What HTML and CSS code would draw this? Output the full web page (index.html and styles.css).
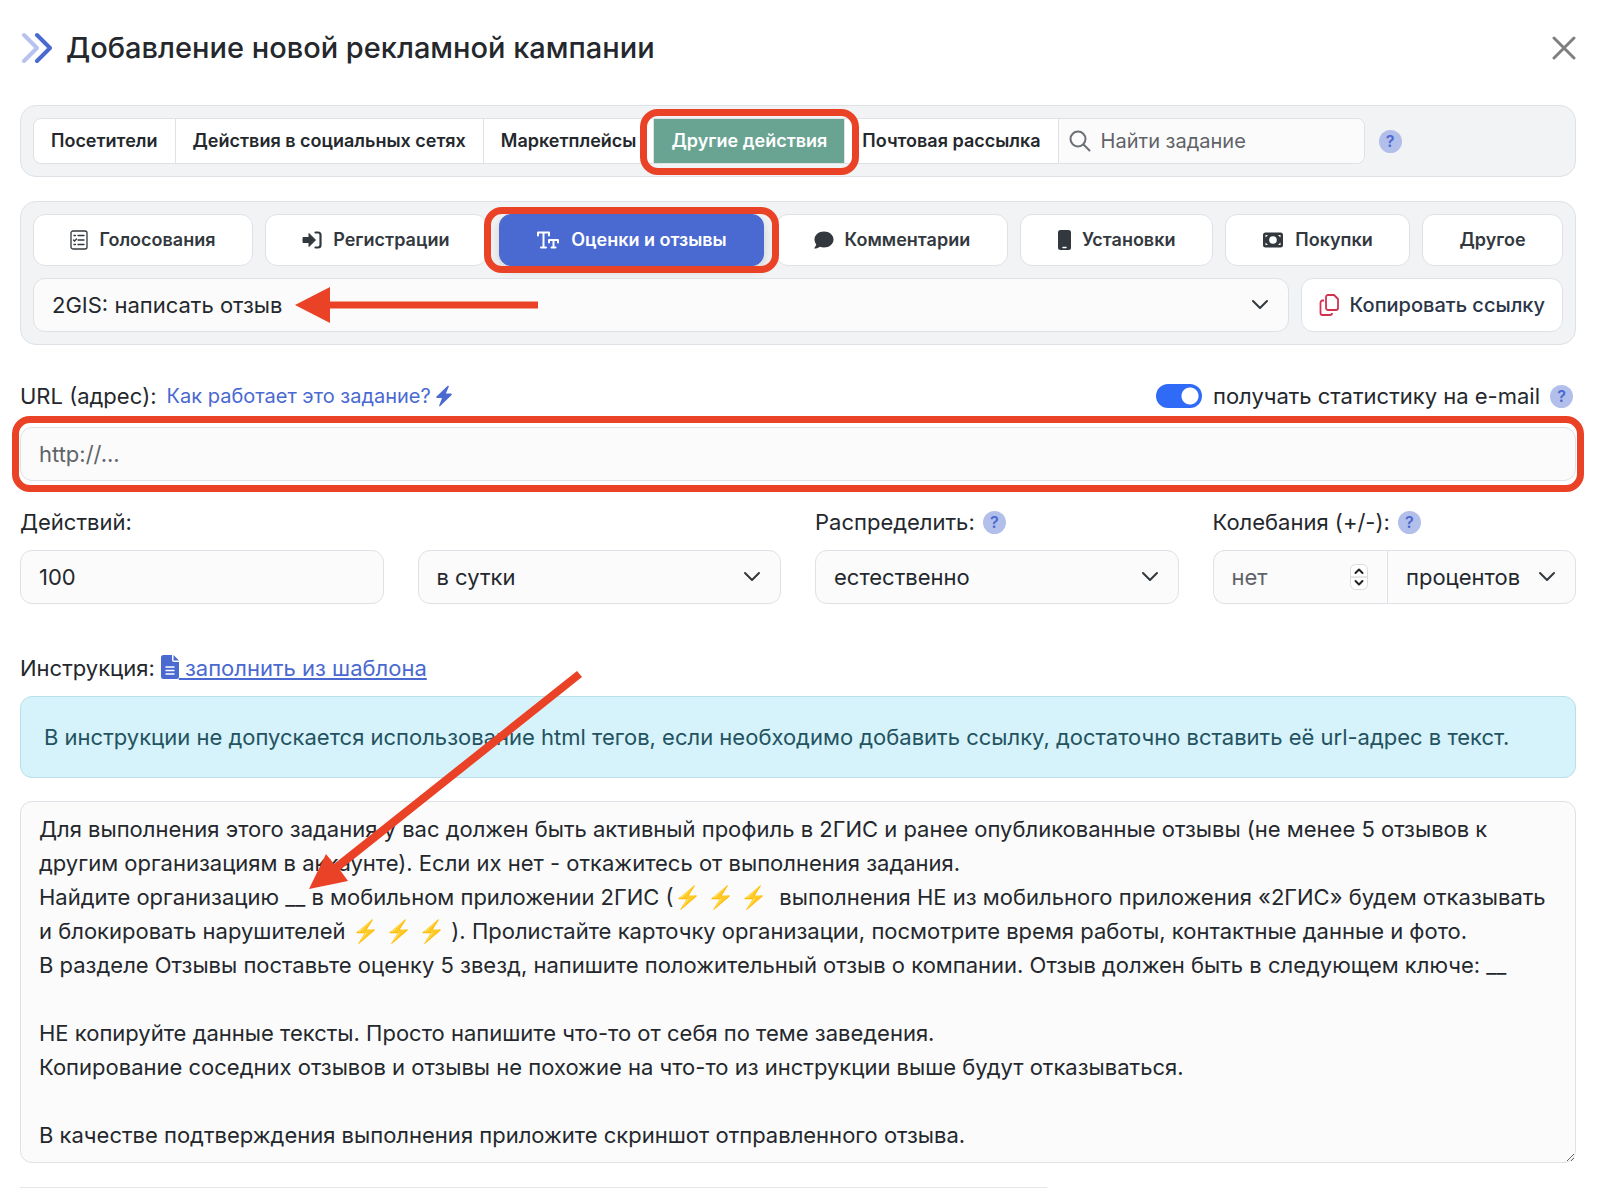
FILE: index.html
```
<!DOCTYPE html>
<html lang="ru">

<head>
  <meta charset="UTF-8">
  <meta name="viewport" content="width=device-width, initial-scale=1.0">
  <title>Добавление новой рекламной кампании</title>
  <link rel="stylesheet" href="styles.css">
</head>

<body>
  <main class="page">
    <header class="header">
      <svg width="32" height="32" viewBox="0 0 32 32" fill="none" stroke-width="4" stroke-linecap="round" stroke-linejoin="round">
        <path d="M4 3l13 13L4 29" stroke="#b7c2ee"/>
        <path d="M17 3l13 13-13 13" stroke="#4a69d1"/>
      </svg>
      <h1 class="title">Добавление новой рекламной кампании</h1>
      <button type="button" class="close" aria-label="Закрыть">
        <svg width="24" height="24" viewBox="0 0 24 24" fill="none" stroke="#7f7f7f" stroke-width="3" stroke-linecap="round"><path d="M2 2l20 20M22 2L2 22"/></svg>
      </button>
    </header>

    <nav class="panel tabs">
      <div class="tab-group">
        <button type="button" class="tab">Посетители</button>
        <button type="button" class="tab">Действия в социальных сетях</button>
        <button type="button" class="tab">Маркетплейсы</button>
        <button type="button" class="tab tab-active">Другие действия</button>
        <button type="button" class="tab">Почтовая рассылка</button>
        <div class="search">
          <svg width="22" height="22" viewBox="0 0 22 22" fill="none" stroke="#6c7076" stroke-width="2" stroke-linecap="round"><circle cx="9" cy="9" r="7.5"/><path d="M14.5 14.5l6 6"/></svg>
          <input type="search" placeholder="Найти задание" aria-label="Найти задание">
        </div>
      </div>
      <button type="button" class="help">?</button>
    </nav>

    <section class="panel">
      <div class="types">
        <button type="button" class="type">
          <svg width="18" height="20" viewBox="0 0 18 20" fill="none" stroke="#32383e" stroke-width="1.3"><rect x="1" y="1" width="16" height="18" rx="2"/><path d="M8 5.5h6M8 10h6M8 14.5h6M4 5.5h1.500M3.500 10l1 1 2-2M4 14.500h1.500" stroke-linecap="round"/></svg>
          Голосования
        </button>
        <button type="button" class="type">
          <svg width="20" height="20" viewBox="0 0 20 20"><path d="M1 7.500h6v-4l6.500 6.500L7 16.500v-4H1z" fill="#32383e" stroke="#32383e" stroke-linejoin="round"/><path d="M13.500 2.500H16A2.500 2.500 0 0 1 18.500 5v10a2.500 2.500 0 0 1-2.500 2.500h-2.500" fill="none" stroke="#32383e" stroke-width="2.2" stroke-linecap="round"/></svg>
          Регистрации
        </button>
        <button type="button" class="type type-active">
          <svg width="24" height="20" viewBox="0 0 24 20" fill="none" stroke="#fff" stroke-width="2"><path d="M2 5.500v-3h11v3M7.500 2.500v15M5 17.500h5M13 12.500V10h9v2.500M17.500 10v7.500M15.500 17.500h4" stroke-linecap="round" stroke-linejoin="round"/></svg>
          Оценки и отзывы
        </button>
        <button type="button" class="type">
          <svg width="20" height="20" viewBox="0 0 20 20" fill="#32383e"><path d="M10 1.500c5.300 0 9.500 3.500 9.500 8s-4.200 8-9.500 8c-1.500 0-2.900-.3-4.200-.8C4.600 17.700 2.600 18.500.8 18.500c-.5 0-.6-.5-.3-.8.9-1 1.600-2.200 1.700-3.400C1.100 13 .5 11.300.5 9.500c0-4.500 4.200-8 9.500-8z"/></svg>
          Комментарии
        </button>
        <button type="button" class="type">
          <svg width="14" height="20" viewBox="0 0 14 20"><rect x="1" width="13" height="20" rx="2.5" fill="#32383e"/><path d="M6 17.500h3" stroke="#fff" stroke-width="1.5" stroke-linecap="round"/></svg>
          Установки
        </button>
        <button type="button" class="type">
          <svg width="22" height="20" viewBox="0 0 22 20"><rect x="1" y="2.5" width="20" height="15" rx="2.5" fill="#32383e"/><circle cx="11" cy="10" r="3.8" fill="#fff"/><path d="M3.500 5H6L3.500 7.500zM18.500 5H16l2.500 2.500zM3.500 15H6l-2.500-2.500zM18.500 15H16l2.500-2.500z" fill="#fff"/></svg>
          Покупки
        </button>
        <button type="button" class="type">Другое</button>
      </div>
      <div class="task-row">
        <div class="select task-select">
          <select aria-label="Задание">
            <option>2GIS: написать отзыв</option>
          </select>
          <svg class="chevron" width="18" height="18" viewBox="0 0 18 18"><path d="M2 5l7 7 7-7"/></svg>
          <svg class="arrow arrow-task" width="244" height="36" viewBox="0 0 244 36" fill="#ea4226"><path d="M0 18L35 0v14.500h208v7H35V36z"/></svg>
        </div>
        <button type="button" class="copy">
          <svg width="20" height="22" viewBox="0 0 20 22" fill="none" stroke="#d03250" stroke-width="1.8" stroke-linejoin="round"><path d="M9 1h6l4 4v9a2 2 0 0 1-2 2H9a2 2 0 0 1-2-2V3a2 2 0 0 1 2-2z"/><path d="M5 6.500H3.500a2 2 0 0 0-2 2V19a2 2 0 0 0 2 2H11a2 2 0 0 0 2-2"/></svg>
          Копировать ссылку
        </button>
      </div>
    </section>

    <form>
      <div class="line url-line">
        <label for="url">URL (адрес):</label>
        <a href="#" class="how">Как работает это задание?
          <svg width="18" height="22" viewBox="0 0 18 22" fill="#4a69d1"><path d="M12.500 1l-11 10.500c-.5.6-.2 1.500.6 1.500H7l-3 8c.4.3.9.2 1.300-.1L16.600 10c.5-.6.2-1.400-.6-1.400h-5.200l3.100-7.100c-.2-.8-.9-1-1.400-.5z"/></svg>
        </a>
        <label class="stat"><input type="checkbox" class="toggle" checked>получать статистику на e-mail</label>
        <button type="button" class="help">?</button>
      </div>
      <div class="url">
        <input type="text" id="url" class="field" placeholder="http://...">
      </div>

      <div class="columns">
        <div>
          <div class="line"><label for="count">Действий:</label></div>
          <input type="text" id="count" class="field" value="100">
        </div>
        <div class="bottom">
          <div class="select">
            <select aria-label="Период">
              <option>в сутки</option>
            </select>
            <svg class="chevron" width="18" height="18" viewBox="0 0 18 18"><path d="M2 5l7 7 7-7"/></svg>
          </div>
        </div>
        <div>
          <div class="line"><label for="spread">Распределить:</label><button type="button" class="help">?</button></div>
          <div class="select">
            <select id="spread">
              <option>естественно</option>
            </select>
            <svg class="chevron" width="18" height="18" viewBox="0 0 18 18"><path d="M2 5l7 7 7-7"/></svg>
          </div>
        </div>
        <div>
          <div class="line"><label for="swing">Колебания (+/-):</label><button type="button" class="help">?</button></div>
          <div class="group">
            <div class="number">
              <input type="number" id="swing" class="field" placeholder="нет">
              <svg class="spin" width="18" height="26" viewBox="0 0 18 26" fill="none"><rect x=".5" y=".5" width="17" height="25" rx="5" fill="#fff" stroke="#dcdcdc"/><path d="M1 13h16" stroke="#d0d0d0"/><path d="M5.500 9L9 5.500 12.500 9M5.500 17L9 20.500l3.500-3.500" stroke="#222" stroke-width="2" stroke-linecap="round" stroke-linejoin="round"/></svg>
            </div>
            <div class="select">
              <select aria-label="Единицы">
                <option>процентов</option>
              </select>
              <svg class="chevron" width="18" height="18" viewBox="0 0 18 18"><path d="M2 5l7 7 7-7"/></svg>
            </div>
          </div>
        </div>
      </div>

      <div class="instruction">
        <div class="line">
          <label for="text">Инструкция:</label>
          <a href="#" class="template"><svg width="18" height="24" viewBox="0 0 18 24"><path d="M2.500 0H11v5a2 2 0 0 0 2 2h5v14.500a2.500 2.500 0 0 1-2.500 2.500h-13A2.500 2.500 0 0 1 0 21.500v-19A2.500 2.500 0 0 1 2.500 0zM12.500 0L18 5.500h-5.500z" fill="#4a69d1"/><path d="M4.500 12h9M4.500 15.500h9M4.500 19h9" stroke="#fff" stroke-width="1.5"/></svg>&nbsp;заполнить из шаблона</a>
        </div>
        <div class="alert">В инструкции не допускается использование html тегов, если необходимо добавить ссылку, достаточно вставить её url-адрес в текст.</div>
        <textarea id="text" class="field" rows="10">Для выполнения этого задания у вас должен быть активный профиль в 2ГИС и ранее опубликованные отзывы (не менее 5 отзывов к другим организациям в аккаунте). Если их нет - откажитесь от выполнения задания.
Найдите организацию __ в мобильном приложении 2ГИС (⚡️ ⚡️ ⚡️  выполнения НЕ из мобильного приложения «2ГИС» будем отказывать и блокировать нарушителей ⚡️ ⚡️ ⚡️ ). Пролистайте карточку организации, посмотрите время работы, контактные данные и фото.
В разделе Отзывы поставьте оценку 5 звезд, напишите положительный отзыв о компании. Отзыв должен быть в следующем ключе: __

НЕ копируйте данные тексты. Просто напишите что-то от себя по теме заведения.
Копирование соседних отзывов и отзывы не похожие на что-то из инструкции выше будут отказываться.

В качестве подтверждения выполнения приложите скриншот отправленного отзыва.</textarea>
        <svg class="arrow arrow-text" width="276" height="220" viewBox="0 0 276 220" fill="#ea4226"><path d="M0 218l17-35 8 10L268 0l5 6L31 199l8 11z"/></svg>
      </div>
    </form>
    <hr class="divider">
  </main>
</body>
</html>
```

FILE: styles.css
```
* {
  box-sizing: border-box;
}
body {
  margin: 0;
  background-color: #fff;
  color: #24282d;
  font-family: Inter, "Liberation Sans", sans-serif;
  font-size: 22px;
  line-height: 34px;
}
button, input, select, textarea {
  font: inherit;
  color: inherit;
  margin: 0;
}
button {
  cursor: pointer;
}
svg {
  flex: none;
}
.page {
  padding: 32px 24px 0 20px;
}
.header {
  display: flex;
  align-items: center;
  gap: 14px;
  height: 32px;
  margin-bottom: 41px;
}
.title {
  flex: 1;
  margin: 0;
  font-size: 29px;
  font-weight: 500;
}
.close {
  display: flex;
  padding: 0;
  border: none;
  background: none;
}

/* panels */
.panel {
  border: 1px solid #dee1e6;
  border-radius: 16px;
  background-color: #f2f3f5;
  padding: 12px;
}
.tabs {
  display: flex;
  align-items: center;
  gap: 14px;
  margin-bottom: 24px;
}
.tab-group {
  display: flex;
  height: 46px;
  border: 1px solid #dee1e6;
  border-radius: 8px;
  background-color: #fff;
}
.tab {
  position: relative;
  border: none;
  border-right: 1px solid #dee1e6;
  background: none;
  padding: 0 17px;
  font-size: 18px;
  font-weight: 600;
  white-space: nowrap;
}
.tab-active {
  background-color: #69a492;
  color: #fff;
}
.search {
  display: flex;
  align-items: center;
  gap: 10px;
  width: 305px;
  padding: 0 10px;
  border-radius: 0 8px 8px 0;
  background-color: #fbfbfb;
}
.search input {
  flex: 1;
  min-width: 0;
  border: none;
  background: none;
  padding: 0;
  font-size: 20px;
}
::placeholder {
  color: #5f6368;
  opacity: 1;
}
.help {
  width: 23px;
  height: 23px;
  flex: none;
  border: none;
  border-radius: 50%;
  background-color: #b3bfeb;
  color: #4a69d1;
  padding: 0;
  font-size: 16px;
  font-weight: 600;
  line-height: 23px;
}
.types {
  display: flex;
  gap: 12px;
  margin-bottom: 12px;
}
.type {
  position: relative;
  flex: 1 1 auto;
  display: flex;
  align-items: center;
  justify-content: center;
  gap: 11px;
  height: 52px;
  padding: 0 16px;
  border: 1px solid #dee1e6;
  border-radius: 12px;
  background-color: #fff;
  color: #32383e;
  font-size: 18px;
  font-weight: 600;
  white-space: nowrap;
}
.type-active {
  border-color: #4a69d1;
  background-color: #4a69d1;
  color: #fff;
  box-shadow: 0 4px 12px rgba(0, 0, 0, .15);
}
.task-row {
  display: flex;
  gap: 12px;
}
.task-select {
  flex: 1;
}
.copy {
  display: flex;
  align-items: center;
  gap: 11px;
  padding: 0 17px;
  border: 1px solid #dee1e6;
  border-radius: 12px;
  background-color: #fff;
  color: #2a3547;
  font-size: 20px;
  font-weight: 500;
}

/* form fields */
.field, select {
  display: block;
  width: 100%;
  height: 54px;
  padding: 0 18px;
  border: 1px solid #dee1e6;
  border-radius: 12px;
  background-color: #fbfbfb;
}
select {
  appearance: none;
}
textarea.field {
  height: auto;
  padding: 10px 18px;
  overflow: hidden;
}
.select, .number, .url, .instruction {
  position: relative;
}
.chevron {
  position: absolute;
  right: 20px;
  top: 18px;
  fill: none;
  stroke: #32383e;
  stroke-width: 2;
  stroke-linecap: round;
  stroke-linejoin: round;
  pointer-events: none;
}
.line {
  display: flex;
  align-items: center;
  gap: 8px;
  height: 34px;
}
.url-line {
  gap: 10px;
  margin: 34px 0 14px;
  padding-right: 3px;
}
.url {
  margin-bottom: 24px;
}
a {
  color: #4a69d1;
}
.how {
  display: flex;
  align-items: center;
  gap: 4px;
  font-size: 20px;
  text-decoration: none;
}
.stat {
  display: flex;
  align-items: center;
  gap: 11px;
  margin-left: auto;
}
.toggle {
  appearance: none;
  width: 46px;
  height: 24px;
  border-radius: 12px;
  background: radial-gradient(circle at 34px 12px, #fff 8px, #2f6bf6 9px);
}
.columns {
  display: grid;
  grid-template-columns: repeat(4, 1fr);
  gap: 34px;
  margin-bottom: 47px;
}
.columns .line {
  margin-bottom: 11px;
}
.bottom {
  align-self: end;
}
.group {
  display: flex;
}
.number {
  flex: 1;
}
.number .field {
  appearance: textfield;
  border-right: none;
  border-radius: 12px 0 0 12px;
}
.number .field::-webkit-inner-spin-button {
  display: none;
}
.group select {
  padding-right: 54px;
  border-radius: 0 12px 12px 0;
}
.spin {
  position: absolute;
  right: 19px;
  top: 14px;
}
.instruction .line {
  gap: 6px;
  margin-bottom: 11px;
}
.template svg {
  vertical-align: -3px;
}
.alert {
  margin-bottom: 23px;
  padding: 23px;
  border: 1px solid #b9dfe9;
  border-radius: 12px;
  background-color: #d6f2fa;
  color: #235360;
}
.divider {
  width: 66%;
  height: 2px;
  margin: 24px 0 0;
  border: none;
  background-color: #e3e6ea;
}

/* red highlights */
.tab-active::after, .type-active::after, .url::after {
  content: "";
  position: absolute;
  z-index: 1;
  border: 7px solid #ea4226;
  border-radius: 18px;
  pointer-events: none;
}
.tab-active::after {
  inset: -10px -15px -12px -14px;
}
.type-active::after {
  inset: -8px -16px;
}
.url::after {
  inset: -11px -8px;
}
.arrow {
  position: absolute;
  z-index: 1;
  pointer-events: none;
}
.arrow-task {
  left: 262px;
  top: 9px;
}
.arrow-text {
  left: 289px;
  top: 20px;
}
```
